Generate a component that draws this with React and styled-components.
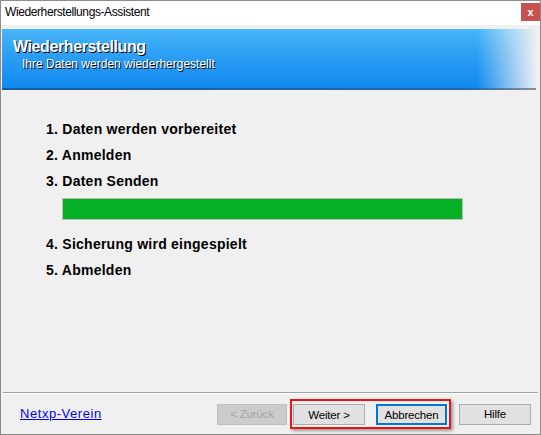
import React from "react";
import styled, { createGlobalStyle } from "styled-components";

const Global = createGlobalStyle`
  html, body { margin: 0; padding: 0; background: #ffffff; }
  * { box-sizing: border-box; }
`;

// Window frame
const Window = styled.div`
  width: 541px;
  height: 435px;
  display: flex;
  flex-direction: column;
  background: #f0f0f0;
  border: 1px solid #8c8c8c;
  font-family: "Liberation Sans", Arial, sans-serif;
  color: #000;
`;

const TitleBar = styled.div`
  height: 24px;
  flex: none;
  background: #ffffff;
  display: flex;
  justify-content: space-between;
  align-items: flex-start;
  padding-left: 4px;
`;

const TitleText = styled.span`
  font-size: 12px;
  letter-spacing: -0.4px;
  line-height: 22px;
`;

const CloseButton = styled.div`
  width: 19px;
  height: 18px;
  margin-top: 2px;
  background: #c75050;
  color: #fff;
  font-size: 11px;
  font-weight: bold;
  display: flex;
  align-items: center;
  justify-content: center;
`;

// Blue header
const BannerWrap = styled.div`
  flex: none;
  padding: 4px 4px 0 1px;
`;

const Banner = styled.div`
  height: 59px;
  padding: 7px 0 0 11px;
  background:
    linear-gradient(to right, rgba(242, 242, 242, 0) 0%, rgba(242, 242, 242, 0) 89%, rgba(242, 242, 242, 0.96) 100%),
    linear-gradient(to bottom, #48b6f7 0%, #2c9ef3 45%, #1289ef 100%);
  color: #fff;
`;

const BannerLine = styled.div`
  height: 2px;
  background: linear-gradient(to right, #1a5c9c 0%, #1f69ad 88%, #8f8f8f 100%);
`;

const BannerTitle = styled.div`
  font-size: 16px;
  font-weight: bold;
  letter-spacing: -0.4px;
  line-height: 21px;
  text-shadow: 1px 1px 0 #000;
`;

const BannerSub = styled.div`
  font-size: 12px;
  line-height: 15px;
  padding-left: 9px;
  text-shadow: 1px 1px 0 #000;
`;

// Steps
const Content = styled.div`
  flex: 1;
  padding: 26px 0 0 45px;
`;

const Step = styled.div`
  font-size: 14px;
  font-weight: bold;
  letter-spacing: 0.25px;
  line-height: 26px;
`;

const Progress = styled.div`
  width: 401px;
  height: 22px;
  margin: 4px 0 11px 16px;
  border: 1px solid #bcbcbc;
  background: #e6e6e6;
`;

const ProgressFill = styled.div`
  height: 100%;
  background: #06b025;
`;

// Footer
const Separator = styled.div`
  height: 1px;
  margin: 0 2px;
  background: #a0a0a0;
  border-bottom: 1px solid #ffffff;
  box-sizing: content-box;
`;

const Footer = styled.div`
  height: 40px;
  flex: none;
  display: flex;
  align-items: center;
  padding: 0 9px 0 19px;
`;

const Link = styled.a`
  font-size: 13px;
  letter-spacing: 0.55px;
  color: #0000ff;
  text-decoration: underline;
  margin-top: -1px;
`;

const Buttons = styled.div`
  margin-left: auto;
  display: flex;
  align-items: center;
`;

const Button = styled.div`
  width: ${(p) => p.$w || 72}px;
  height: 21px;
  margin-right: ${(p) => p.$mr || 0}px;
  display: flex;
  align-items: center;
  justify-content: center;
  font-size: 11.5px;
  letter-spacing: -0.2px;
  background: ${(p) => (p.$disabled ? "#cccccc" : "#e1e1e1")};
  color: ${(p) => (p.$disabled ? "#a3a3a3" : "#000")};
  border: ${(p) =>
    p.$focused ? "2px solid #0078d7" : `1px solid ${p.$disabled ? "#bfbfbf" : "#adadad"}`};
`;

const Highlight = styled.div`
  display: flex;
  gap: 11px;
  margin-right: 8px;
  padding: 3px 2px 2px 1px;
  border: 2px solid #ee1111;
  box-shadow: 2px 2px 3px rgba(0, 0, 0, 0.35);
`;

const steps = [
  "1. Daten werden vorbereitet",
  "2. Anmelden",
  "3. Daten Senden",
];

const laterSteps = ["4. Sicherung wird eingespielt", "5. Abmelden"];

export default function App() {
  const progress = 100;
  return (
    <>
      <Global />
      <Window>
        <TitleBar>
          <TitleText>Wiederherstellungs-Assistent</TitleText>
          <CloseButton>x</CloseButton>
        </TitleBar>
        <BannerWrap>
          <Banner>
            <BannerTitle>Wiederherstellung</BannerTitle>
            <BannerSub>Ihre Daten werden wiederhergestellt</BannerSub>
          </Banner>
          <BannerLine />
        </BannerWrap>
        <Content>
          {steps.map((s) => (
            <Step key={s}>{s}</Step>
          ))}
          <Progress>
            <ProgressFill style={{ width: `${progress}%` }} />
          </Progress>
          {laterSteps.map((s) => (
            <Step key={s}>{s}</Step>
          ))}
        </Content>
        <Separator />
        <Footer>
          <Link href="#">Netxp-Verein</Link>
          <Buttons>
            <Button $disabled $w={70} $mr={3}>&lt; Zurück</Button>
            <Highlight>
              <Button>Weiter &gt;</Button>
              <Button $focused $w={71}>Abbrechen</Button>
            </Highlight>
            <Button>Hilfe</Button>
          </Buttons>
        </Footer>
      </Window>
    </>
  );
}
